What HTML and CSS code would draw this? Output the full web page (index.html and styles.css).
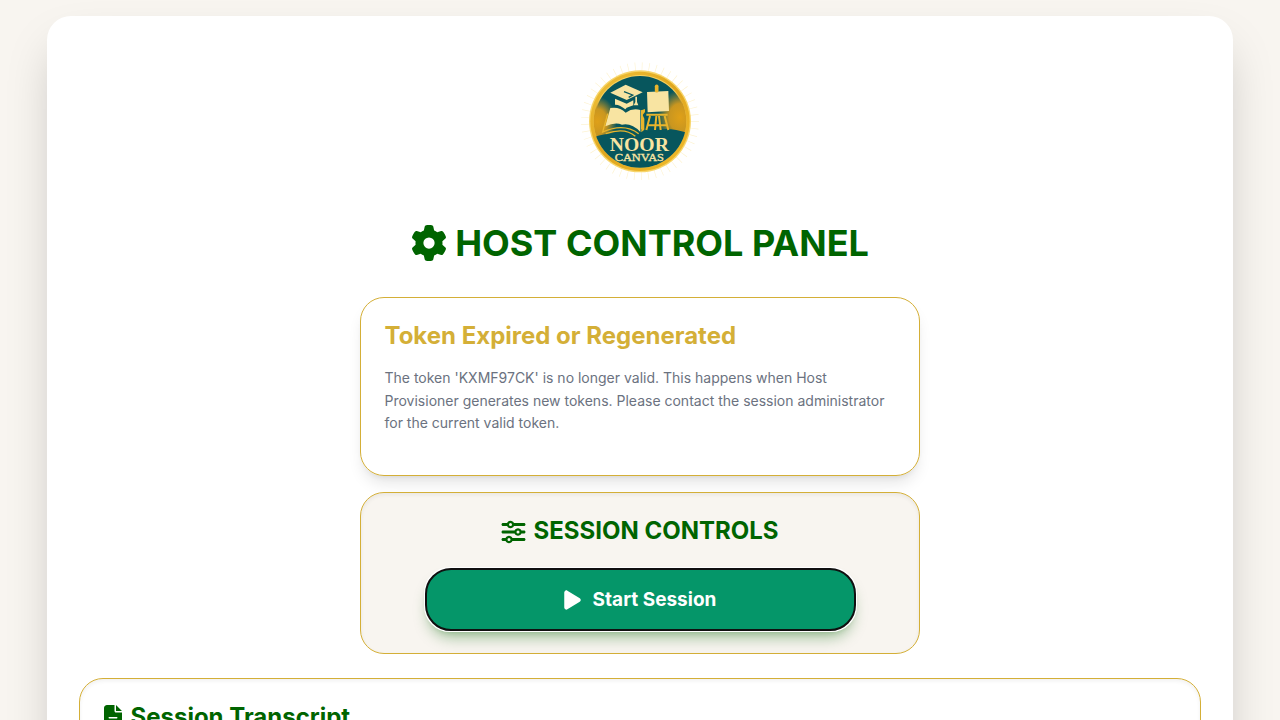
FILE: index.html
```html
<!DOCTYPE html>
<html lang="en">
<head>
<meta charset="utf-8">
<title>Host Control Panel</title>
<link rel="stylesheet" href="styles.css">
</head>
<body>
<main class="panel">
  <svg class="logo" viewBox="0 0 360 360" role="img" aria-label="Noor Canvas">
    <defs>
      <clipPath id="disc"><circle cx="180" cy="184" r="139"/></clipPath>
      <radialGradient id="glow"><stop offset="0" stop-color="#dfa018"/><stop offset=".5" stop-color="#c99620"/><stop offset="1" stop-color="#c99620" stop-opacity="0"/></radialGradient>
      <linearGradient id="gold" x1="0" y1="0" x2="1" y2="1"><stop offset="0" stop-color="#f0c33c"/><stop offset=".5" stop-color="#e0a61e"/><stop offset="1" stop-color="#f3bd2c"/></linearGradient>
    </defs>
    <circle class="rays" cx="180" cy="184" r="164"/>
    <circle cx="180" cy="184" r="153" fill="#f7d56a"/>
    <circle cx="180" cy="184" r="149" fill="url(#gold)"/>
    <circle cx="180" cy="184" r="139" fill="#f8d260"/>
    <g clip-path="url(#disc)">
      <circle cx="180" cy="184" r="136" fill="#07565d"/>
      <ellipse cx="52" cy="185" rx="58" ry="76" fill="url(#glow)"/>
      <ellipse cx="300" cy="172" rx="66" ry="82" fill="url(#glow)"/>
      <path d="M30 236Q105 205 180 230Q245 188 330 222V340H30Z" fill="#07565d"/>
    </g>
    <g fill="#f8e4a2">
      <path d="M91 98L137 74L188 97L140 120Z"/>
      <path d="M105 116L140 131L160 121V136L140 143L136 148Q119 133 105 134Z"/>
      <path d="M166 110H171V126L175 136H161L166 126Z"/>
      <path d="M91 144Q118 139 137 158Q158 143 181 150V216Q155 188 126 194Q105 185 76 199Z"/>
      <path d="M201 96L265 93L267 153L203 157Z"/>
    </g>
    <path d="M132 95L158 105L146 112" fill="none" stroke="#07565d" stroke-width="4"/>
    <g fill="none" stroke="#e9b52c">
      <path d="M83 161L68 216Q132 187 176 221M77 221Q135 201 166 229M185 151V208" stroke-width="4"/>
      <path d="M184 151L195 147V156L188 165L193 176V209L184 217Z" fill="#e9b52c" stroke="none"/>
      <path d="M230 79V92" stroke-width="11" stroke-linecap="round"/>
      <path d="M199 164H263M210 168L199 210M229 168L225 210M237 168L242 210M254 168L265 210M205 196H262" stroke-width="6"/>
    </g>
    <text class="logo-name" x="178" y="272" textLength="177" lengthAdjust="spacingAndGlyphs">NOOR</text>
    <text class="logo-sub" x="178" y="304" textLength="148" lengthAdjust="spacingAndGlyphs">CANVAS</text>
  </svg>

  <h1 class="title"><svg class="icon" viewBox="0 0 512 512"><path d="M495.9 166.6c3.2 8.7 .5 18.4-6.4 24.6l-43.3 39.4c1.1 8.3 1.7 16.8 1.7 25.4s-.6 17.1-1.7 25.4l43.3 39.4c6.9 6.2 9.6 15.9 6.4 24.6c-4.4 11.9-9.7 23.3-15.8 34.3l-4.7 8.1c-6.6 11-14 21.4-22.1 31.2c-5.9 7.2-15.7 9.6-24.5 6.8l-55.7-17.7c-13.4 10.3-28.2 18.9-44 25.4l-12.5 57.1c-2 9.1-9 16.3-18.2 17.8c-13.8 2.3-28 3.5-42.5 3.5s-28.7-1.2-42.5-3.5c-9.2-1.5-16.2-8.7-18.2-17.8l-12.5-57.1c-15.8-6.5-30.6-15.1-44-25.4L83.1 425.9c-8.8 2.8-18.6 .3-24.5-6.8c-8.1-9.8-15.5-20.2-22.1-31.2l-4.7-8.1c-6.1-11-11.4-22.4-15.8-34.3c-3.2-8.7-.5-18.4 6.4-24.6l43.3-39.4C64.6 273.1 64 264.6 64 256s.6-17.1 1.7-25.4L22.4 191.2c-6.9-6.2-9.6-15.9-6.4-24.6c4.4-11.9 9.7-23.3 15.8-34.3l4.7-8.1c6.6-11 14-21.4 22.1-31.2c5.9-7.2 15.7-9.6 24.5-6.8l55.7 17.7c13.4-10.3 28.2-18.9 44-25.4l12.5-57.1c2-9.1 9-16.3 18.2-17.8C227.3 1.2 241.5 0 256 0s28.7 1.2 42.5 3.5c9.2 1.5 16.2 8.7 18.2 17.8l12.5 57.1c15.8 6.5 30.6 15.1 44 25.4l55.7-17.7c8.8-2.8 18.6-.3 24.5 6.8c8.1 9.8 15.5 20.2 22.1 31.2l4.7 8.1c6.1 11 11.4 22.4 15.8 34.3zM256 336a80 80 0 1 0 0-160 80 80 0 1 0 0 160z"/></svg><span>HOST CONTROL PANEL</span></h1>

  <section class="card notice">
    <h2 class="notice-title">Token Expired or Regenerated</h2>
    <p class="notice-text">The token 'KXMF97CK' is no longer valid. This happens when Host Provisioner generates new tokens. Please contact the session administrator for the current valid token.</p>
  </section>

  <section class="card controls">
    <h2 class="heading"><svg class="icon" viewBox="0 0 512 512"><path d="M0 416c0 17.7 14.3 32 32 32l54.7 0c12.3 28.3 40.5 48 73.3 48s61-19.7 73.3-48L480 448c17.7 0 32-14.3 32-32s-14.3-32-32-32l-246.7 0c-12.3-28.3-40.5-48-73.3-48s-61 19.7-73.3 48L32 384c-17.7 0-32 14.3-32 32zm128 0a32 32 0 1 1 64 0 32 32 0 1 1 -64 0zM320 256a32 32 0 1 1 64 0 32 32 0 1 1 -64 0zm32-80c-32.8 0-61 19.7-73.3 48L32 224c-17.7 0-32 14.3-32 32s14.3 32 32 32l246.7 0c12.3 28.3 40.5 48 73.3 48s61-19.7 73.3-48l54.7 0c17.7 0 32-14.3 32-32s-14.3-32-32-32l-54.7 0c-12.3-28.3-40.5-48-73.3-48zM192 128a32 32 0 1 1 0-64 32 32 0 1 1 0 64zm73.3-64C253 35.7 224.8 16 192 16s-61 19.7-73.3 48L32 64C14.3 64 0 78.3 0 96s14.3 32 32 32l86.7 0c12.3 28.3 40.5 48 73.3 48s61-19.7 73.3-48L480 128c17.7 0 32-14.3 32-32s-14.3-32-32-32L265.3 64z"/></svg><span>SESSION CONTROLS</span></h2>
    <button class="start" type="button"><svg class="play" viewBox="0 0 384 512"><path d="M73 39c-14.8-9.1-33.4-9.4-48.5-.9S0 62.6 0 80L0 432c0 17.4 9.4 33.4 24.5 41.9s33.7 8.1 48.5-.9L361 297c14.3-8.7 23-24.2 23-41s-8.7-32.2-23-41L73 39z"/></svg><span>Start Session</span></button>
  </section>

  <section class="transcript">
    <h2 class="heading"><svg class="file" viewBox="0 0 384 512"><path d="M64 0C28.7 0 0 28.7 0 64L0 448c0 35.3 28.7 64 64 64l256 0c35.3 0 64-28.7 64-64l0-288-128 0c-17.7 0-32-14.3-32-32L224 0 64 0zM256 0l0 128 128 0L256 0zM112 256l160 0c8.8 0 16 7.2 16 16s-7.2 16-16 16l-160 0c-8.8 0-16-7.2-16-16s7.2-16 16-16z"/></svg><span>Session Transcript</span></h2>
  </section>
</main>
</body>
</html>
```
FILE: styles.css
```css
* { box-sizing: border-box; }
html { overflow: hidden; }
body {
  margin: 0;
  height: 720px;
  overflow: hidden;
  padding-top: 16px;
  background: #f8f5f0;
  font-family: Inter, sans-serif;
}
h1, h2, p { margin: 0; }
svg { display: block; flex: none; fill: currentColor; }
.panel {
  display: flex;
  flex-direction: column;
  align-items: center;
  width: 1186px;
  height: 1200px;
  margin: 0 auto;
  padding: 44px 32px 32px;
  border-radius: 24px;
  background: #fff;
  box-shadow: 0 25px 50px -12px rgba(0, 0, 0, .25);
}
.logo { width: 120px; height: 120px; flex: none; }
.rays { fill: none; stroke: #fdf3d2; stroke-width: 26; stroke-dasharray: 2 19; }
.logo-name, .logo-sub { fill: #f8e4a2; text-anchor: middle; }
.logo-name { font: 700 59px "Liberation Serif", serif; }
.logo-sub { font: 400 33px "Liberation Serif", serif; stroke: #f8e4a2; stroke-width: 1; }
.title {
  display: flex;
  align-items: center;
  gap: 8px;
  height: 44px;
  margin-top: 41px;
  color: #006400;
  font-size: 36px;
  font-weight: 700;
  line-height: 44px;
}
.title .icon { width: 36px; height: 36px; }
.card {
  width: 560px;
  border: 1px solid #d4af37;
  border-radius: 24px;
}
.notice {
  height: 179px;
  margin-top: 32px;
  padding: 23px 24px 24px 23.5px;
  box-shadow: 0 10px 15px -3px rgba(0, 0, 0, .1), 0 4px 6px -4px rgba(0, 0, 0, .1);
}
.notice-title { color: #d4af37; font-size: 24px; font-weight: 700; line-height: 29px; }
.notice-text { margin-top: 17.3px; color: #6b7280; font-size: 14px; line-height: 22.4px; }
.controls {
  display: flex;
  flex-direction: column;
  align-items: center;
  height: 162px;
  margin-top: 16px;
  padding: 23px 24px;
  background: #f8f5f0;
  box-shadow: inset 0 2px 4px rgba(0, 0, 0, .06);
}
.heading {
  display: flex;
  align-items: center;
  gap: 8px;
  color: #006400;
  font-size: 24px;
  font-weight: 700;
  line-height: 29px;
}
.heading .icon { width: 25px; height: 24px; margin: 2px -.5px 0 -.5px; }
.start {
  display: flex;
  align-items: center;
  justify-content: center;
  gap: 12px;
  width: 429px;
  height: 61.5px;
  flex: none;
  margin-top: 23.5px;
  padding: 1px 0 0;
  border: 0;
  border-radius: 25px;
  outline: 1px auto #101010;
  background: #059669;
  color: #fff;
  box-shadow: 0 10px 15px -3px rgba(0, 100, 0, .38), 0 4px 6px -2px rgba(0, 100, 0, .2);
  font: 700 19px/24px Inter, sans-serif;
}
.play { width: 17px; height: 22px; }
.transcript {
  align-self: stretch;
  height: 400px;
  margin-top: 24px;
  padding: 23px 24px;
  border: 1px solid #d4af37;
  border-radius: 24px;
  box-shadow: inset 0 2px 4px rgba(0, 0, 0, .06);
}
.file { width: 18px; height: 24px; margin: 0 .5px 0 0; }
```
